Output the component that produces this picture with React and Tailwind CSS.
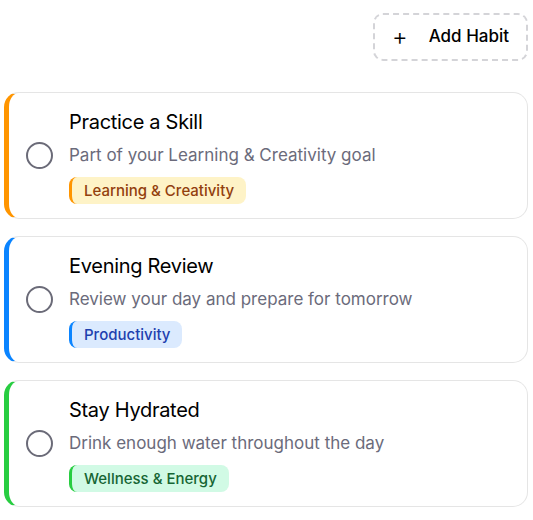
export default function App() {
  const habits = [
    {
      id: 1,
      title: 'Practice a Skill',
      desc: 'Part of your Learning & Creativity goal',
      tag: 'Learning & Creativity',
      bar: 'border-l-[#ff9500]',
      chip: 'bg-[#fef3c7] text-[#92400e] border-l-[#ff9500]',
    },
    {
      id: 2,
      title: 'Evening Review',
      desc: 'Review your day and prepare for tomorrow',
      tag: 'Productivity',
      bar: 'border-l-[#0a84ff]',
      chip: 'bg-[#dbeafe] text-[#1e40af] border-l-[#0a84ff]',
    },
    {
      id: 3,
      title: 'Stay Hydrated',
      desc: 'Drink enough water throughout the day',
      tag: 'Wellness & Energy',
      bar: 'border-l-[#28cd41]',
      chip: 'bg-[#d1fae5] text-[#166534] border-l-[#28cd41]',
    },
  ]

  return (
    <div className="min-h-screen bg-white pl-[4px] pr-[5px] pt-[13px] font-['Inter',sans-serif]">
      <div className="flex justify-end">
        <button className="flex h-[48px] w-[155px] items-center justify-center gap-[21px] rounded-[10px] border-2 border-dashed border-[#d4d4d8] text-[17px] font-medium text-black">
          <span className="text-[24px] font-light leading-none">+</span>
          <span>Add Habit</span>
        </button>
      </div>

      <div className="mt-[31px] flex flex-col gap-[17px]">
        {habits.map(h => (
          <div
            key={h.id}
            className={`flex h-[127px] items-center gap-[16px] rounded-[15px] border border-[#e5e5e5] border-l-[5px] pl-[17px] ${h.bar}`}
          >
            <div className="h-[27px] w-[27px] shrink-0 rounded-full border-2 border-[#6b6b78]" />
            <div className="flex flex-col">
              <h3 className="text-[20px] leading-[28px] tracking-[-0.3px] text-black">{h.title}</h3>
              <p className="mt-[7px] text-[17px] leading-[24px] text-[#6b6b7b]">{h.desc}</p>
              <span
                className={`mt-[10px] self-start rounded-[8px] border-l-[3px] px-[12px] text-[15px] font-medium leading-[27px] ${h.chip}`}
              >
                {h.tag}
              </span>
            </div>
          </div>
        ))}
      </div>
    </div>
  )
}
